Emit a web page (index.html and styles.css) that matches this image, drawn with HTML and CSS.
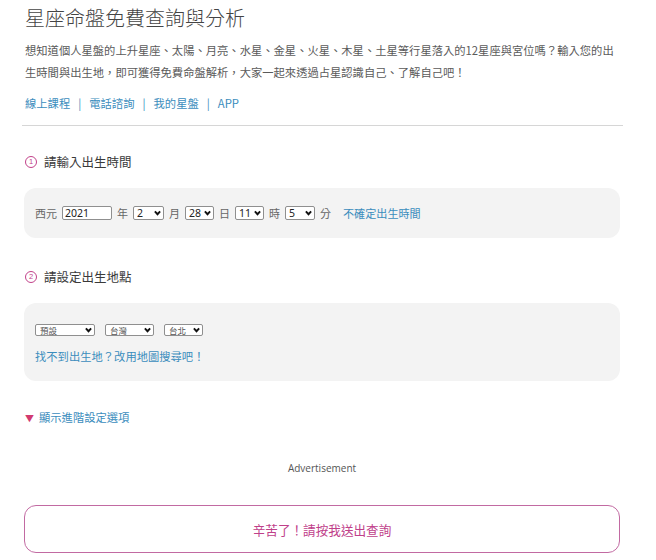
FILE: index.html
```html
<!DOCTYPE html>
<html lang="zh-Hant">
<head>
  <meta charset="UTF-8"/>
  <meta name="viewport" content="width=device-width,initial-scale=1"/>
  <title>星座命盤免費查詢與分析</title>
  <link rel="stylesheet" href="styles.css">
</head>
<body>

  <div class="page">
    <h1>星座命盤免費查詢與分析</h1>
    <p class="intro">想知道個人星盤的上升星座、太陽、月亮、水星、金星、火星、木星、土星等行星落入的12星座與宮位嗎？輸入您的出生時間與出生地，即可獲得免費命盤解析，大家一起來透過占星認識自己、了解自己吧！</p>
    <div class="links">
      <a href="#">線上課程</a><span class="sep">|</span><a href="#">電話諮詢</a><span class="sep">|</span><a href="#">我的星盤</a><span class="sep">|</span><a href="#">APP</a>
    </div>
    <hr class="divider">

    <form id="chartForm">
      <div class="section-title"><span class="num">1</span>請輸入出生時間</div>
      <div class="panel panel-time">
        <span class="lbl">西元</span>
        <input class="year" type="text" name="year" value="2021">
        <span class="lbl">年</span>
        <span class="sel w31">
          <select name="month"><option>2</option></select>
          <svg viewBox="0 0 8 6"><path d="M1 1.2 4 4.4 7 1.2"/></svg>
        </span>
        <span class="lbl">月</span>
        <span class="sel w29">
          <select name="day"><option>28</option></select>
          <svg viewBox="0 0 8 6"><path d="M1 1.2 4 4.4 7 1.2"/></svg>
        </span>
        <span class="lbl">日</span>
        <span class="sel w29">
          <select name="hour"><option>11</option></select>
          <svg viewBox="0 0 8 6"><path d="M1 1.2 4 4.4 7 1.2"/></svg>
        </span>
        <span class="lbl">時</span>
        <span class="sel w30">
          <select name="minute"><option>5</option></select>
          <svg viewBox="0 0 8 6"><path d="M1 1.2 4 4.4 7 1.2"/></svg>
        </span>
        <span class="lbl">分</span>
        <a class="unsure" href="#">不確定出生時間</a>
      </div>

      <div class="section-title"><span class="num">2</span>請設定出生地點</div>
      <div class="panel panel-place">
        <div class="place-row">
          <span class="sel small w60">
            <select name="region"><option>預設</option></select>
            <svg viewBox="0 0 8 6"><path d="M1 1.2 4 4.4 7 1.2"/></svg>
          </span>
          <span class="sel small w49">
            <select name="country"><option>台灣</option></select>
            <svg viewBox="0 0 8 6"><path d="M1 1.2 4 4.4 7 1.2"/></svg>
          </span>
          <span class="sel small w39">
            <select name="city"><option>台北</option></select>
            <svg viewBox="0 0 8 6"><path d="M1 1.2 4 4.4 7 1.2"/></svg>
          </span>
        </div>
        <a class="map-link" href="#">找不到出生地？改用地圖搜尋吧！</a>
      </div>

      <div class="advanced"><span class="tri">▼</span><a href="#">顯示進階設定選項</a></div>

      <div class="ad">Advertisement</div>

      <button class="submit" type="submit">辛苦了！請按我送出查詢</button>
    </form>
  </div>

</body>
</html>
```

FILE: styles.css
```css
body {
  margin: 0; background: #fff; color: #444;
  font-family: "Noto Sans", "Noto Sans CJK TC", sans-serif;
}
a { color: #3b8dbd; text-decoration: none; }
.page { width: 600px; padding-left: 24px; }

h1 {
  margin: 0; padding-top: 4px; padding-left: 1px;
  font-size: 20px; line-height: 28px; font-weight: 300; color: #444;
  font-family: "Noto Sans CJK TC", sans-serif;
}
.intro {
  margin: 7px 0 0; padding-left: 1px;
  font-size: 11.3px; line-height: 22px; color: #5a5a5a;
  font-family: "Noto Sans CJK TC", sans-serif;
}
.links {
  margin-top: 10px; padding-left: 1px;
  font-size: 11.3px; line-height: 20px;
  font-family: "Noto Sans CJK TC", sans-serif;
}
.links .sep { color: #3b8dbd; margin: 0 8px; }
.divider {
  margin: 12px 0 0 -2px; width: 601px;
  border: none; border-top: 1px solid #d6d6d6;
}

.section-title {
  display: flex; align-items: center; gap: 7px;
  margin: 29px 0 16px; padding-left: 1px;
  font-size: 12.5px; line-height: 20px; color: #3a3a3a;
  font-family: "Noto Sans CJK TC", sans-serif;
}
.section-title .num {
  width: 10px; height: 10px; border: 1px solid #c2428a; border-radius: 50%;
  color: #c2428a; font-size: 7.5px; line-height: 10px; text-align: center;
  font-family: "Liberation Sans", sans-serif;
}
#chartForm .section-title:first-child { margin-top: 26px; }

.panel {
  width: 596px; box-sizing: border-box;
  background: #f3f3f3; border-radius: 12px;
  font-family: "Noto Sans CJK TC", sans-serif;
}
.panel-time {
  height: 50px; padding: 0 11px;
  display: flex; align-items: center; gap: 5px;
}
.lbl { font-size: 11px; color: #666; line-height: 14px; }
.year {
  width: 50px; height: 14px; box-sizing: border-box; margin: 0;
  padding: 0 2px; border: 1px solid #8f8f8f; border-radius: 2px;
  font: 10.5px "Noto Sans", sans-serif; color: #222; background: #fff;
}
.unsure { margin-left: 7px; font-size: 11.1px; line-height: 14px; }

.sel { position: relative; display: block; height: 14px; flex: none; }
.sel select {
  appearance: none; -webkit-appearance: none; display: block;
  width: 100%; height: 100%; box-sizing: border-box; margin: 0;
  padding: 0 0 0 3px; border: 1px solid #8f8f8f; border-radius: 2px;
  background: #fff; color: #222;
  font: 10.5px/12px "Noto Sans", sans-serif;
}
.sel svg {
  position: absolute; right: 3px; top: 4px; width: 7px; height: 6px;
  fill: none; stroke: #111; stroke-width: 2.2; pointer-events: none;
}
.w29 { width: 29px; } .w30 { width: 30px; } .w31 { width: 31px; }
.w39 { width: 39px; } .w49 { width: 49px; } .w60 { width: 60px; }
.sel.small { height: 12px; }
.sel.small select {
  font: 8.5px/10px "Noto Sans CJK TC", sans-serif; color: #555; padding-left: 4px;
}
.sel.small svg { top: 3px; }

.panel-place { padding: 21px 11px 16px; }
.place-row { display: flex; gap: 10px; }
.map-link { display: block; margin-top: 12px; font-size: 11.3px; line-height: 17px; }

.advanced {
  margin-top: 27px; padding-left: 1px;
  font-size: 11.3px; line-height: 18px;
  font-family: "Noto Sans CJK TC", sans-serif;
}
.advanced .tri { color: #d23a70; font-size: 9px; margin-right: 5px; }

.ad {
  width: 596px; margin-top: 32px; text-align: center;
  font: 10px/16px "Open Sans", sans-serif; color: #555;
}
.submit {
  display: block; width: 596px; height: 48px; margin-top: 29px;
  background: #fff; border: 1px solid #c26aa2; border-radius: 12px;
  color: #c0408a; font: 12.6px "Noto Sans CJK TC", sans-serif;
  cursor: pointer;
}
```
